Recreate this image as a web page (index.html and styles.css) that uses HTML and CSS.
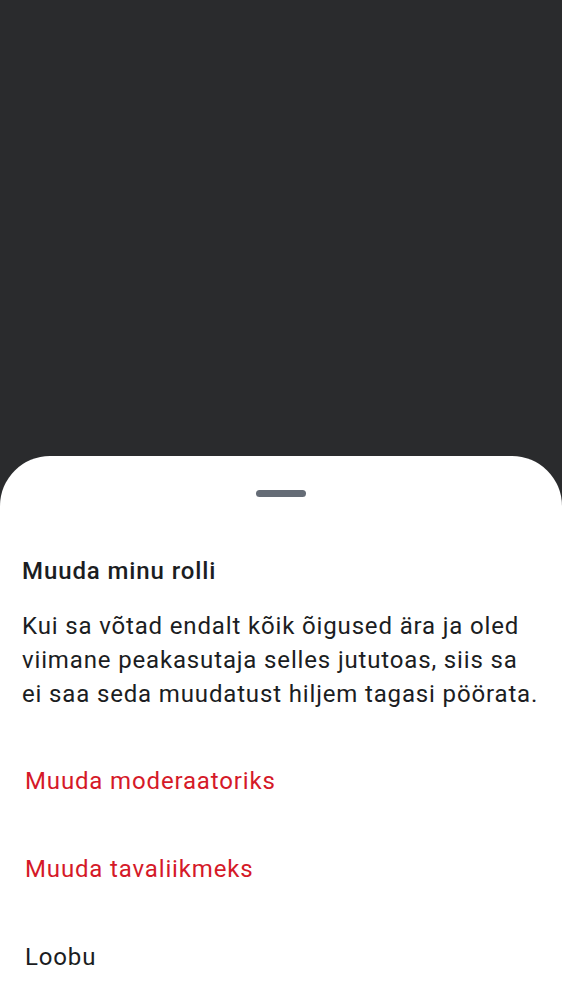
FILE: index.html
```html
<!DOCTYPE html>
<html lang="et">
<head>
<meta charset="utf-8">
<link rel="stylesheet" href="styles.css">
</head>
<body>
<div class="screen">
  <div class="backdrop"></div>
  <div class="sheet">
    <div class="handle"></div>
    <h2 class="title">Muuda minu rolli</h2>
    <p class="desc">Kui sa võtad endalt kõik õigused ära ja oled viimane peakasutaja selles jututoas, siis sa ei saa seda muudatust hiljem tagasi pöörata.</p>
    <div class="options">
      <div class="option danger">Muuda moderaatoriks</div>
      <div class="option danger">Muuda tavaliikmeks</div>
      <div class="option">Loobu</div>
    </div>
  </div>
</div>
</body>
</html>
```
FILE: styles.css
```css
html, body {
  margin: 0;
  padding: 0;
  background: #2a2b2d;
}
.screen {
  width: 562px;
  height: 1000px;
  display: flex;
  flex-direction: column;
  overflow: hidden;
  font-family: Roboto, "Noto Sans", sans-serif;
  color: #1b1d22;
}
.backdrop {
  height: 456px;
  flex: none;
  background: #2a2b2d;
}
.sheet {
  flex: 1;
  background: #ffffff;
  border-radius: 50px 50px 0 0;
  display: flex;
  flex-direction: column;
}
.handle {
  align-self: center;
  width: 50px;
  height: 7px;
  border-radius: 4px;
  background: #656c76;
  margin-top: 34px;
}
.title {
  margin: 60px 0 0 22px;
  font-size: 24px;
  font-weight: 500;
  line-height: 28px;
  letter-spacing: 0.9px;
}
.desc {
  margin: 24px 23px 0 22px;
  font-size: 24px;
  line-height: 34px;
  font-weight: 400;
  letter-spacing: 0.85px;
}
.options {
  display: flex;
  flex-direction: column;
  margin-top: 26px;
}
.option {
  height: 88px;
  display: flex;
  align-items: center;
  padding-left: 25px;
  font-size: 24px;
  letter-spacing: 0.85px;
}
.option.danger {
  color: #d51928;
}
```
